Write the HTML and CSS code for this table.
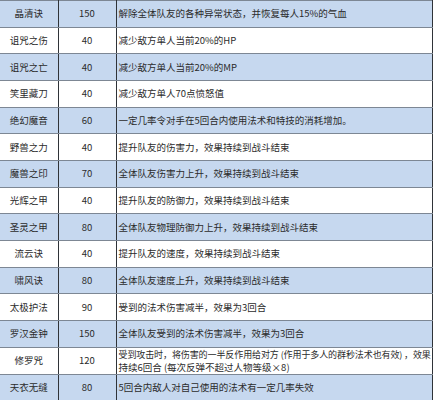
FILE: index.html
```html
<!DOCTYPE html>
<html lang="zh-CN">
<head>
<meta charset="utf-8">
<link rel="stylesheet" href="styles.css">
</head>
<body>
<table class="skills">
  <colgroup>
    <col class="c-name">
    <col class="c-cost">
    <col class="c-desc">
  </colgroup>
  <tbody>
    <tr class="alt"><td class="name">晶清诀</td><td class="cost">150</td><td class="desc">解除全体队友的各种异常状态，并恢复每人15%的气血</td></tr>
    <tr><td class="name">诅咒之伤</td><td class="cost">40</td><td class="desc">减少敌方单人当前20%的HP</td></tr>
    <tr class="alt"><td class="name">诅咒之亡</td><td class="cost">40</td><td class="desc">减少敌方单人当前20%的MP</td></tr>
    <tr><td class="name">笑里藏刀</td><td class="cost">40</td><td class="desc">减少敌方单人70点愤怒值</td></tr>
    <tr class="alt"><td class="name">绝幻魔音</td><td class="cost">60</td><td class="desc">一定几率令对手在5回合内使用法术和特技的消耗增加。</td></tr>
    <tr><td class="name">野兽之力</td><td class="cost">40</td><td class="desc">提升队友的伤害力，效果持续到战斗结束</td></tr>
    <tr class="alt"><td class="name">魔兽之印</td><td class="cost">70</td><td class="desc">全体队友伤害力上升，效果持续到战斗结束</td></tr>
    <tr><td class="name">光辉之甲</td><td class="cost">40</td><td class="desc">提升队友的防御力，效果持续到战斗结束</td></tr>
    <tr class="alt"><td class="name">圣灵之甲</td><td class="cost">80</td><td class="desc">全体队友物理防御力上升，效果持续到战斗结束</td></tr>
    <tr><td class="name">流云诀</td><td class="cost">40</td><td class="desc">提升队友的速度，效果持续到战斗结束</td></tr>
    <tr class="alt"><td class="name">啸风诀</td><td class="cost">80</td><td class="desc">全体队友速度上升，效果持续到战斗结束</td></tr>
    <tr><td class="name">太极护法</td><td class="cost">90</td><td class="desc">受到的法术伤害减半，效果为3回合</td></tr>
    <tr class="alt"><td class="name">罗汉金钟</td><td class="cost">150</td><td class="desc">全体队友受到的法术伤害减半，效果为3回合</td></tr>
    <tr><td class="name">修罗咒</td><td class="cost">120</td><td class="desc"><span class="line just">受到攻击时，将伤害的一半反作用给对方 (作用于多人的群秒法术也有效) ，效果</span><span class="line">持续6回合 (每次反弹不超过人物等级×8)</span></td></tr>
    <tr class="alt"><td class="name">天衣无缝</td><td class="cost">80</td><td class="desc">5回合内敌人对自己使用的法术有一定几率失效</td></tr>
  </tbody>
</table>
</body>
</html>
```
FILE: styles.css
```css
html, body {
  margin: 0;
  padding: 0;
  background: #ffffff;
}

.skills {
  width: 432px;
  height: 400px;
  border-collapse: collapse;
  table-layout: fixed;
  font-family: "Noto Sans CJK SC", "Noto Sans", sans-serif;
  font-size: 9.5px;
  color: #2b2b2b;
}

.c-name { width: 58px; }
.c-cost { width: 58px; }
.c-desc { width: 316px; }

.skills tr {
  height: 26.66px;
}

.skills td {
  border-top: 1px solid #7d8794;
  border-bottom: 1px solid #7d8794;
  border-left: 1px solid #2f3338;
  border-right: 1px solid #2f3338;
  padding: 0;
  vertical-align: middle;
  white-space: nowrap;
  line-height: 13px;
  overflow: hidden;
}

.skills td:first-child {
  border-left: none;
}

.skills tr.alt td {
  background: #c6d8ef;
}

.name, .cost {
  text-align: center;
}

.skills td.desc {
  text-align: left;
  padding-left: 2px;
  padding-right: 1px;
}

.line {
  display: block;
}

.just {
  font-size: 9px;
  letter-spacing: -0.3px;
  text-align: justify;
  text-align-last: justify;
}
```
